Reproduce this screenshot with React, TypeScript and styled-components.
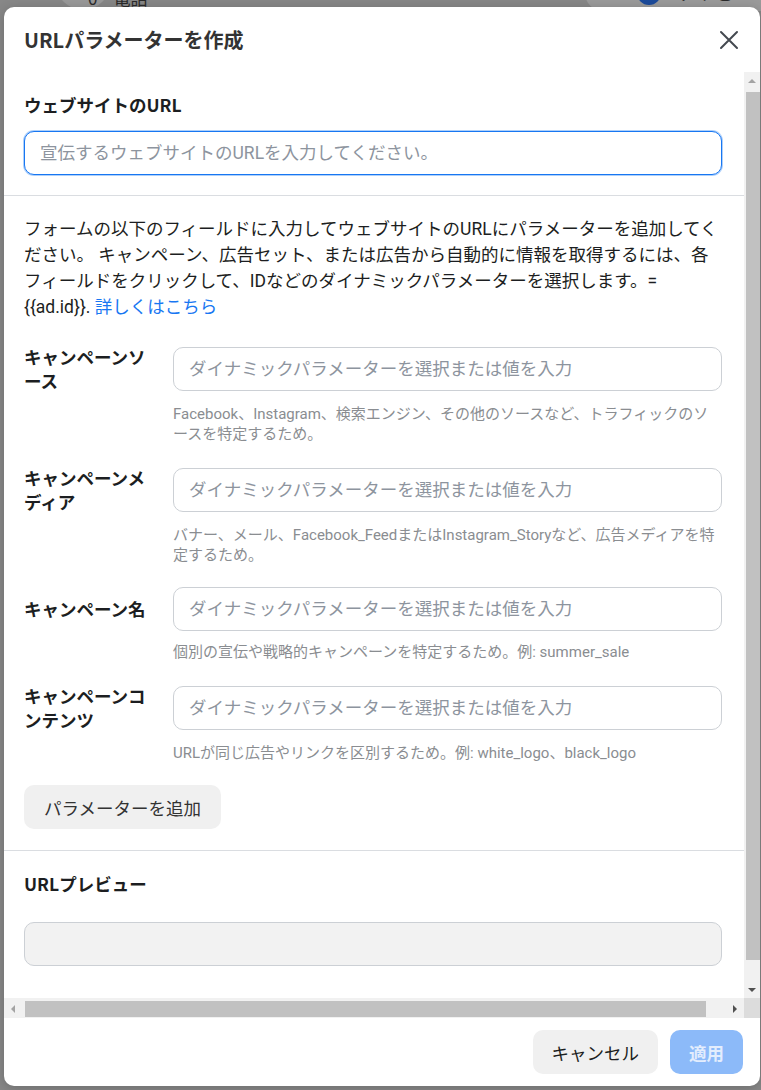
import React from 'react';
import styled, { createGlobalStyle } from 'styled-components';

const GlobalStyle = createGlobalStyle`
  html, body {
    margin: 0;
    padding: 0;
    height: 100%;
    overflow: hidden;
  }
  body {
    font-family: Roboto, "Noto Sans CJK JP", sans-serif;
    color: #1c1e21;
  }
  * {
    box-sizing: border-box;
  }
`;

const fields = [
  {
    label: ['キャンペーンソ', 'ース'],
    help: ['Facebook、Instagram、検索エンジン、その他のソースなど、トラフィックのソ', 'ースを特定するため。'],
  },
  {
    label: ['キャンペーンメ', 'ディア'],
    help: ['バナー、メール、Facebook_FeedまたはInstagram_Storyなど、広告メディアを特', '定するため。'],
  },
  {
    label: ['キャンペーン名'],
    help: ['個別の宣伝や戦略的キャンペーンを特定するため。例: summer_sale'],
  },
  {
    label: ['キャンペーンコ', 'ンテンツ'],
    help: ['URLが同じ広告やリンクを区別するため。例: white_logo、black_logo'],
  },
];

const PLACEHOLDER = 'ダイナミックパラメーターを選択または値を入力';

const Lines = ({ lines }: { lines: string[] }) => (
  <>
    {lines.map((l, i) => (
      <React.Fragment key={i}>
        {i > 0 && <br />}
        {l}
      </React.Fragment>
    ))}
  </>
);

type Dir = 'up' | 'down' | 'left' | 'right';

const Arrow = ({ dir, color }: { dir: Dir; color: string }) => {
  const pts = {
    up: '0,5 4,1 8,5',
    down: '0,1 8,1 4,5',
    left: '5,0 5,8 1,4',
    right: '1,0 1,8 5,4',
  }[dir];
  const vertical = dir === 'up' || dir === 'down';
  return (
    <svg width={vertical ? 8 : 6} height={vertical ? 6 : 8} viewBox={vertical ? '0 0 8 6' : '0 0 6 8'}>
      <polygon points={pts} fill={color} />
    </svg>
  );
};

export default function App() {
  return (
    <>
      <GlobalStyle />
      <Backdrop>
        <BehindBar>
          <GhostAvatar />
          <GhostText>0</GhostText>
          <GhostText>電話</GhostText>
          <GhostPill>
            <BlueDot />
            <GhostText>アイ ご</GhostText>
          </GhostPill>
        </BehindBar>

        <Dialog>
          <Header>
            <Title>URLパラメーターを作成</Title>
            <CloseButton aria-label="閉じる">
              <svg width="20" height="20" viewBox="0 0 20 20">
                <path d="M2 2 L18 18 M18 2 L2 18" stroke="#444950" strokeWidth="2" strokeLinecap="round" />
              </svg>
            </CloseButton>
          </Header>

          <Body>
            <Viewport>
              <Content>
                <Section>
                  <SectionLabel>ウェブサイトのURL</SectionLabel>
                  <TextInput $focused placeholder="宣伝するウェブサイトのURLを入力してください。" />
                </Section>

                <Section $bottom={21}>
                  <Intro>
                    フォームの以下のフィールドに入力してウェブサイトのURLにパラメーターを追加してく
                    <br />
                    ださい。 キャンペーン、広告セット、または広告から自動的に情報を取得するには、各
                    <br />
                    フィールドをクリックして、IDなどのダイナミックパラメーターを選択します。=
                    <br />
                    {'{{ad.id}}. '}
                    <Link href="#">詳しくはこちら</Link>
                  </Intro>

                  <FieldList>
                    {fields.map((f, i) => (
                      <Field key={i}>
                        <FieldLabel>
                          <Lines lines={f.label} />
                        </FieldLabel>
                        <TextInput placeholder={PLACEHOLDER} />
                        <Help>
                          <Lines lines={f.help} />
                        </Help>
                      </Field>
                    ))}
                  </FieldList>

                  <GrayButton>パラメーターを追加</GrayButton>
                </Section>

                <Section $last>
                  <SectionLabel>URLプレビュー</SectionLabel>
                  <PreviewBox />
                </Section>
              </Content>
            </Viewport>

            <VScroll>
              <ScrollButton $h={17}>
                <Arrow dir="up" color="#a3a3a3" />
              </ScrollButton>
              <VTrack>
                <VThumb />
              </VTrack>
              <ScrollButton $h={17}>
                <Arrow dir="down" color="#505050" />
              </ScrollButton>
            </VScroll>
          </Body>

          <HScroll>
            <HButton>
              <Arrow dir="left" color="#a3a3a3" />
            </HButton>
            <HThumb />
            <HButton>
              <Arrow dir="right" color="#505050" />
            </HButton>
            <Corner />
          </HScroll>

          <Footer>
            <FooterButton>キャンセル</FooterButton>
            <FooterButton $primary disabled>
              適用
            </FooterButton>
          </Footer>
        </Dialog>
      </Backdrop>
    </>
  );
}

const Backdrop = styled.div`
  position: relative;
  width: 100vw;
  height: 100vh;
  overflow: hidden;
  background: #878787;
`;

const BehindBar = styled.div`
  display: flex;
  align-items: center;
  height: 18px;
  margin-top: -11px;
  padding-left: 56px;
  gap: 16px;
`;

const GhostAvatar = styled.div`
  width: 54px;
  height: 54px;
  margin-top: -30px;
  margin-right: -38px;
  border-radius: 50%;
  background: #999;
  flex-shrink: 0;
`;

const GhostText = styled.span`
  font-family: "Noto Sans CJK JP", sans-serif;
  font-size: 17px;
  line-height: 18px;
  color: #2a2a2a;
  white-space: nowrap;
`;

const GhostPill = styled.div`
  display: flex;
  align-items: center;
  gap: 18px;
  margin-left: auto;
  width: 176px;
  height: 36px;
  margin-top: -10px;
  padding-left: 52px;
  border-radius: 18px 0 0 18px;
  background: #9a9a9a;
`;

const BlueDot = styled.div`
  width: 24px;
  height: 24px;
  border-radius: 50%;
  background: #1b4a9a;
  flex-shrink: 0;
`;

const Dialog = styled.div`
  position: absolute;
  top: 7px;
  left: 4px;
  width: 756px;
  height: 1079px;
  display: flex;
  flex-direction: column;
  background: #fff;
  border-radius: 10px;
  overflow: hidden;
  box-shadow: 0 2px 12px rgba(0, 0, 0, 0.2);
`;

const Header = styled.div`
  flex: 0 0 65px;
  display: flex;
  align-items: center;
  justify-content: space-between;
  padding: 0 20px 0 20px;
`;

const Title = styled.h1`
  margin: 0;
  font-family: "Noto Sans CJK JP", sans-serif;
  font-size: 20px;
  font-weight: 700;
  color: #333;
  line-height: 26px;
`;

const CloseButton = styled.button`
  width: 22px;
  height: 22px;
  padding: 0;
  border: 0;
  background: transparent;
  display: flex;
  align-items: center;
  justify-content: center;
  cursor: pointer;
`;

const Body = styled.div`
  flex: 1;
  min-height: 0;
  display: flex;
`;

const Viewport = styled.div`
  flex: 1;
  min-width: 0;
  overflow: hidden;
`;

const Content = styled.div`
  display: flex;
  flex-direction: column;
`;

const Section = styled.div<{ $last?: boolean; $bottom?: number }>`
  padding: 20px 22px ${({ $bottom }) => $bottom ?? 20}px 20px;
  border-bottom: ${({ $last }) => ($last ? '0' : '1px solid #dadde1')};
  display: flex;
  flex-direction: column;
  align-items: flex-start;
`;

const SectionLabel = styled.div`
  font-family: "Noto Sans CJK JP", sans-serif;
  font-size: 17.5px;
  font-weight: 700;
  line-height: 25px;
  color: #1c1e21;
  margin-bottom: 14px;
`;

const TextInput = styled.input<{ $focused?: boolean }>`
  width: 100%;
  height: 44px;
  padding: 0 15px;
  border-radius: 10px;
  border: 1px solid ${({ $focused }) => ($focused ? '#1877f2' : '#ccd0d5')};
  box-shadow: ${({ $focused }) => ($focused ? '0 0 0 1px rgba(24, 119, 242, 0.35)' : 'none')};
  font-family: Roboto, "Noto Sans CJK JP", sans-serif;
  font-size: 17.5px;
  color: #1c1e21;
  outline: none;
  background: #fff;

  &::placeholder {
    color: #8d949e;
  }
`;

const Intro = styled.p`
  margin: 0 0 25px;
  font-size: 17.5px;
  line-height: 26px;
  color: #1c1e21;
  white-space: nowrap;
`;

const Link = styled.a`
  color: #1877f2;
  text-decoration: none;
`;

const FieldList = styled.div`
  width: 100%;
  display: flex;
  flex-direction: column;
  gap: 22px;
`;

const Field = styled.div`
  display: grid;
  grid-template-columns: 149px 1fr;
  align-items: center;
  row-gap: 11px;
`;

const FieldLabel = styled.div`
  font-family: "Noto Sans CJK JP", sans-serif;
  font-size: 17.5px;
  font-weight: 700;
  line-height: 24px;
  color: #1c1e21;
`;

const Help = styled.div`
  grid-column: 2;
  font-size: 15px;
  line-height: 20px;
  color: #8a8d91;
  white-space: nowrap;
`;

const GrayButton = styled.button`
  margin-top: 22px;
  height: 44px;
  padding: 0 20px;
  border: 0;
  border-radius: 10px;
  background: #f0f0f0;
  font-family: "Noto Sans CJK JP", sans-serif;
  font-size: 17.5px;
  color: #333;
  cursor: pointer;
`;

const PreviewBox = styled.div`
  width: 100%;
  height: 44px;
  margin-top: 12px;
  border: 1px solid #ccd0d5;
  border-radius: 10px;
  background: #f2f2f2;
`;

const VScroll = styled.div`
  flex: 0 0 16px;
  display: flex;
  flex-direction: column;
  background: #f1f1f1;
`;

const ScrollButton = styled.div<{ $h: number }>`
  flex: 0 0 ${({ $h }) => $h}px;
  display: flex;
  align-items: center;
  justify-content: center;
`;

const VTrack = styled.div`
  flex: 1;
  display: flex;
  flex-direction: column;
  padding: 3px 0 21px 2px;
`;

const VThumb = styled.div`
  flex: 1;
  background: #c1c1c1;
`;

const HScroll = styled.div`
  flex: 0 0 20px;
  display: flex;
  align-items: stretch;
  background: #f1f1f1;
  padding-top: 1px;
`;

const HButton = styled.div`
  flex: 0 0 18px;
  display: flex;
  align-items: center;
  justify-content: center;
`;

const HThumb = styled.div`
  flex: 1;
  margin: 2px 20px 1px 3px;
  background: #c1c1c1;
`;

const Corner = styled.div`
  flex: 0 0 16px;
  margin-top: -1px;
  background: #dcdcdc;
`;

const Footer = styled.div`
  flex: 0 0 68px;
  display: flex;
  align-items: center;
  justify-content: flex-end;
  gap: 12px;
  padding: 0 17px 0 20px;
`;

const FooterButton = styled.button<{ $primary?: boolean }>`
  height: 44px;
  padding: 0 19px;
  border: 0;
  border-radius: 10px;
  font-family: "Noto Sans CJK JP", sans-serif;
  font-size: 17.5px;
  font-weight: ${({ $primary }) => ($primary ? 700 : 400)};
  color: ${({ $primary }) => ($primary ? '#e3edfd' : '#1c1e21')};
  background: ${({ $primary }) => ($primary ? '#8cbaf9' : '#f0f0f0')};
  cursor: pointer;
`;
